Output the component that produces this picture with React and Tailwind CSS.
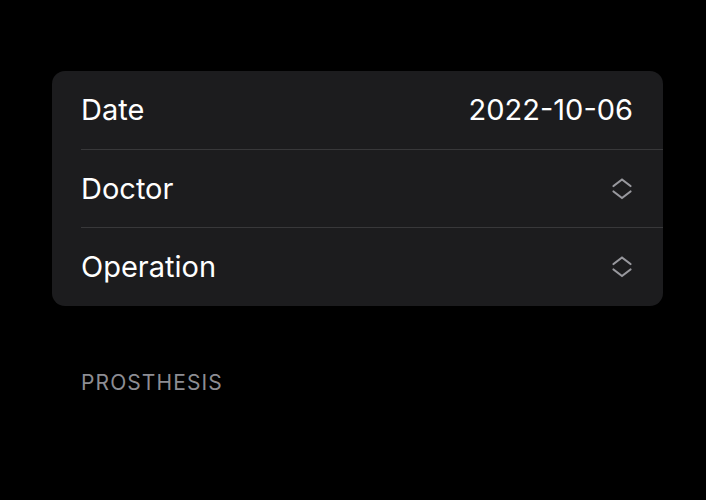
export default function App() {
  const Chev = () => (
    <svg width="22" height="24" viewBox="0 0 22 24" fill="none" stroke="#98989e" strokeWidth="2.2" strokeLinecap="round" strokeLinejoin="round">
      <path d="M2.5 9 L11 2.5 L19.5 9" />
      <path d="M2.5 14.5 L11 21 L19.5 14.5" />
    </svg>
  );
  return (
    <div className="w-[706px] h-[500px] bg-black pt-[71px] pl-[52px] pr-[43px]" style={{ fontFamily: 'Inter, "Noto Sans", sans-serif' }}>
      <div className="bg-[#1c1c1e] rounded-[13px] text-white text-[29px]">
        <div className="h-[78px] flex items-center justify-between pl-[29px] pr-[30px]">
          <span>Date</span>
          <span>2022-10-06</span>
        </div>
        <div className="ml-[29px] h-px bg-[#38383a]" />
        <div className="h-[77px] flex items-center justify-between pl-[29px] pr-[30px]">
          <span>Doctor</span>
          <Chev />
        </div>
        <div className="ml-[29px] h-px bg-[#38383a]" />
        <div className="h-[78px] flex items-center justify-between pl-[29px] pr-[30px]">
          <span>Operation</span>
          <Chev />
        </div>
      </div>
      <div className="mt-[61px] pl-[29px] text-[21px] text-[#8d8d93] tracking-[1.1px]">PROSTHESIS</div>
    </div>
  );
}
